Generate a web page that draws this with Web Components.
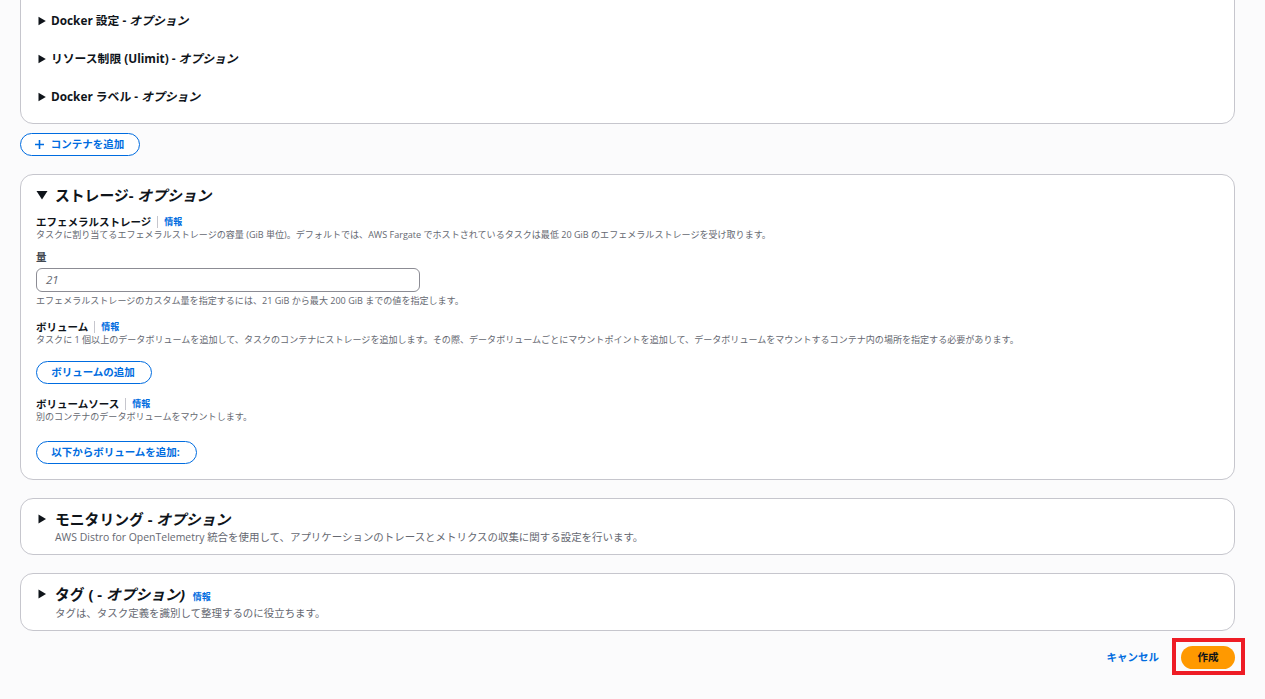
<!DOCTYPE html>
<html lang="ja">
  <head>
    <meta charset="UTF-8" />
    <title>タスク定義</title>
    <style>
      html, body { margin: 0; height: 699px; overflow: hidden; background: #fbfbfc; }
      body { font-family: "Open Sans", "Noto Sans CJK JP", sans-serif; color: #0f141a; }
      main { display: flex; flex-direction: column; padding: 0 30px 0 20px; }
    </style>
  </head>
  <body>
    <main>
      <aws-card style="margin-top:-20px;height:144px;padding-top:20px">
        <aws-row>Docker 設定 - <i>オプション</i></aws-row>
        <aws-row>リソース制限 (Ulimit) - <i>オプション</i></aws-row>
        <aws-row>Docker ラベル - <i>オプション</i></aws-row>
      </aws-card>
      <aws-button plus style="margin-top:9px;align-self:flex-start;width:120px">コンテナを追加</aws-button>

      <aws-card style="margin-top:18px;height:306px;padding:9px 15px 0">
        <aws-heading open>ストレージ- <i>オプション</i></aws-heading>
        <aws-field style="margin-top:9px" info>エフェメラルストレージ
          <span slot="desc">タスクに割り当てるエフェメラルストレージの容量 (GiB 単位)。デフォルトでは、AWS Fargate でホストされているタスクは最低 20 GiB のエフェメラルストレージを受け取ります。</span>
        </aws-field>
        <aws-amount>量
          <span slot="desc">エフェメラルストレージのカスタム量を指定するには、21 GiB から最大 200 GiB までの値を指定します。</span>
        </aws-amount>
        <aws-field style="margin-top:13px" info>ボリューム
          <span slot="desc">タスクに 1 個以上のデータボリュームを追加して、タスクのコンテナにストレージを追加します。その際、データボリュームごとにマウントポイントを追加して、データボリュームをマウントするコンテナ内の場所を指定する必要があります。</span>
        </aws-field>
        <aws-button style="margin-top:15px;width:116px">ボリュームの追加</aws-button>
        <aws-field style="margin-top:13px" info>ボリュームソース
          <span slot="desc">別のコンテナのデータボリュームをマウントします。</span>
        </aws-field>
        <aws-button style="margin-top:18px;width:161px">以下からボリュームを追加:</aws-button>
      </aws-card>

      <aws-card style="margin-top:18px;height:57px;padding:9px 15px 0">
        <aws-heading>モニタリング - <i>オプション</i>
          <span slot="desc">AWS Distro for OpenTelemetry 統合を使用して、アプリケーションのトレースとメトリクスの収集に関する設定を行います。</span>
        </aws-heading>
      </aws-card>

      <aws-card style="margin-top:18px;height:58px;padding:9px 15px 0">
        <aws-heading info style="--desc-gap:1px">タグ ( - <i>オプション)</i>
          <span slot="desc">タグは、タスク定義を識別して整理するのに役立ちます。</span>
        </aws-heading>
      </aws-card>

      <aws-footer style="margin-top:15px"></aws-footer>
    </main>

    <script>
      const INK = "#0f141a";
      const MUTED = "#656871";
      const BLUE = "#006ce0";

      // Outlined panel with rounded corners
      class AwsCard extends HTMLElement {
        constructor() {
          super();
          this.attachShadow({ mode: "open" }).innerHTML = `
            <style>
              :host {
                display: flex;
                flex-direction: column;
                align-items: flex-start;
                box-sizing: border-box;
                background: #fff;
                border: 1px solid #c6c6cd;
                border-radius: 13px;
              }
            </style>
            <slot></slot>`;
        }
      }

      // Collapsed sub-section row in the container panel
      class AwsRow extends HTMLElement {
        constructor() {
          super();
          this.attachShadow({ mode: "open" }).innerHTML = `
            <style>
              :host {
                display: flex;
                align-items: center;
                gap: 5px;
                height: 38px;
                padding-left: 17px;
                font-size: 11.8px;
                font-weight: 700;
                color: ${INK};
              }
              svg { width: 8px; height: 10px; margin-top: 2px; fill: ${INK}; flex: none; }
              span { margin-bottom: 1px; }
            </style>
            <svg viewBox="0 0 8 10"><path d="M.5 .8 7.8 5 .5 9.2z"/></svg>
            <span><slot></slot></span>`;
        }
      }

      // Section heading with caret, optional info link and description
      class AwsHeading extends HTMLElement {
        constructor() {
          super();
          const open = this.hasAttribute("open");
          const info = this.hasAttribute("info");
          this.attachShadow({ mode: "open" }).innerHTML = `
            <style>
              :host {
                display: grid;
                grid-template-columns: 12px auto;
                column-gap: 7px;
                align-items: center;
                justify-content: start;
                font-size: 14.8px;
                line-height: 22px;
                font-weight: 700;
                color: ${INK};
              }
              svg { width: 12px; height: 10px; fill: ${INK}; }
              .info { font-size: 9px; line-height: 1; color: ${BLUE}; margin-left: 4px; }
              .desc {
                grid-column: 2;
                margin-top: var(--desc-gap, 0);
                font-size: 10.46px;
                line-height: 14px;
                font-weight: 400;
                color: ${MUTED};
              }
            </style>
            <svg viewBox="0 0 12 10">
              ${open ? '<path d="M.5 1h11L6 9.5z"/>' : '<path d="M2.5 .5 10 5 2.5 9.5z"/>'}
            </svg>
            <div><slot></slot>${info ? '<span class="info">情報</span>' : ""}</div>
            <div class="desc"><slot name="desc"></slot></div>`;
        }
      }

      // Label, divider, info link and the description below them
      class AwsField extends HTMLElement {
        constructor() {
          super();
          this.attachShadow({ mode: "open" }).innerHTML = `
            <style>
              :host { display: block; }
              .label { display: flex; align-items: center; height: 13px; font-size: 10.5px; font-weight: 700; color: ${INK}; }
              .sep { width: 1px; height: 12px; background: #c6c6cd; margin: 0 6px 0 6px; }
              .info { font-size: 9px; color: ${BLUE}; }
              .desc { font-size: 9.05px; line-height: 13px; color: ${MUTED}; }
            </style>
            <div class="label"><span><slot></slot></span><span class="sep"></span><span class="info">情報</span></div>
            <div class="desc"><slot name="desc"></slot></div>`;
        }
      }

      // Number input with its label and constraint text
      class AwsAmount extends HTMLElement {
        constructor() {
          super();
          this.attachShadow({ mode: "open" }).innerHTML = `
            <style>
              :host { display: block; margin-top: 9px; }
              .label { font-size: 10.5px; line-height: 14px; font-weight: 700; color: #414750; }
              .input {
                box-sizing: border-box;
                width: 384px;
                height: 24px;
                margin-top: 4px;
                padding: 0 0 2px 9px;
                display: flex;
                align-items: center;
                border: 1px solid #8c8c94;
                border-radius: 6px;
                font-size: 11.5px;
                font-style: italic;
                color: ${MUTED};
              }
              .desc { margin-top: 2px; font-size: 9.05px; line-height: 13px; color: ${MUTED}; }
            </style>
            <div class="label"><slot></slot></div>
            <div class="input">21</div>
            <div class="desc"><slot name="desc"></slot></div>`;
        }
      }

      // Pill button, outlined blue by default
      class AwsButton extends HTMLElement {
        constructor() {
          super();
          const plus = this.hasAttribute("plus");
          this.attachShadow({ mode: "open" }).innerHTML = `
            <style>
              :host {
                display: flex;
                align-items: center;
                justify-content: center;
                gap: 6px;
                box-sizing: border-box;
                height: 23px;
                padding: 0 2px 2px 0;
                border: 1px solid ${BLUE};
                border-radius: 12px;
                background: #fff;
                color: ${BLUE};
                font-size: 10.5px;
                font-weight: 700;
              }
              svg { width: 11px; height: 11px; margin-top: 1px; stroke: ${BLUE}; stroke-width: 1.6; fill: none; }
            </style>
            ${plus ? '<svg viewBox="0 0 11 11"><path d="M5.5 1v9M1 5.5h9"/></svg>' : ""}
            <slot></slot>`;
        }
      }

      // Cancel link and highlighted primary action
      class AwsFooter extends HTMLElement {
        constructor() {
          super();
          this.attachShadow({ mode: "open" }).innerHTML = `
            <style>
              :host {
                display: flex;
                justify-content: flex-end;
                align-items: center;
                gap: 22px;
                height: 23px;
                font-size: 10.5px;
                font-weight: 700;
              }
              .cancel { color: ${BLUE}; padding: 0 0 3px 0; }
              .create {
                position: relative;
                display: flex;
                align-items: center;
                justify-content: center;
                width: 54px;
                height: 23px;
                padding-bottom: 2px;
                box-sizing: border-box;
                border-radius: 12px;
                background: #ff9900;
                color: ${INK};
              }
              .create::after {
                content: "";
                position: absolute;
                inset: -8px -10px -6px -9px;
                border: 4px solid #ee1c25;
              }
            </style>
            <span class="cancel">キャンセル</span>
            <span class="create">作成</span>`;
        }
      }

      customElements.define("aws-card", AwsCard);
      customElements.define("aws-row", AwsRow);
      customElements.define("aws-heading", AwsHeading);
      customElements.define("aws-field", AwsField);
      customElements.define("aws-amount", AwsAmount);
      customElements.define("aws-button", AwsButton);
      customElements.define("aws-footer", AwsFooter);
    </script>
  </body>
</html>
